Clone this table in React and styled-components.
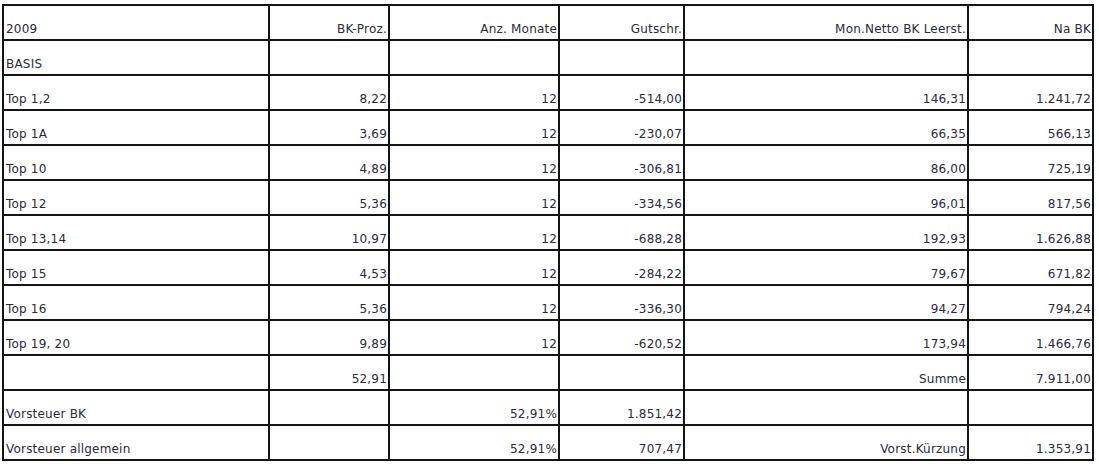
import React from 'react';
import styled, { createGlobalStyle } from 'styled-components';

const GlobalStyle = createGlobalStyle`
  body {
    margin: 0;
    background: #fff;
  }
`;

const Page = styled.div`
  padding: 4px 0 0 2px;
`;

const Table = styled.table`
  border-collapse: collapse;
  table-layout: fixed;
  width: 1092px;
  font-family: "DejaVu Sans", Verdana, sans-serif;
  font-size: 12px;
  letter-spacing: 0.2px;
  color: #2a2a3a;
`;

const Row = styled.tr`
  height: 35px;
`;

const Cell = styled.td`
  border: 2px solid #151515;
  padding: 0 1px 3px ${p => (p.$left ? '2px' : '1px')};
  text-align: ${p => (p.$left ? 'left' : 'right')};
  vertical-align: bottom;
  white-space: nowrap;
  line-height: 13px;
`;

const widths = [266, 120, 170, 125, 284, 125];

const rows = [
  ['2009', 'BK-Proz.', 'Anz. Monate', 'Gutschr.', 'Mon.Netto BK Leerst.', 'Na BK'],
  ['BASIS', '', '', '', '', ''],
  ['Top 1,2', '8,22', '12', '-514,00', '146,31', '1.241,72'],
  ['Top 1A', '3,69', '12', '-230,07', '66,35', '566,13'],
  ['Top 10', '4,89', '12', '-306,81', '86,00', '725,19'],
  ['Top 12', '5,36', '12', '-334,56', '96,01', '817,56'],
  ['Top 13,14', '10,97', '12', '-688,28', '192,93', '1.626,88'],
  ['Top 15', '4,53', '12', '-284,22', '79,67', '671,82'],
  ['Top 16', '5,36', '12', '-336,30', '94,27', '794,24'],
  ['Top 19, 20', '9,89', '12', '-620,52', '173,94', '1.466,76'],
  ['', '52,91', '', '', 'Summe', '7.911,00'],
  ['Vorsteuer BK', '', '52,91%', '1.851,42', '', ''],
  ['Vorsteuer allgemein', '', '52,91%', '707,47', 'Vorst.Kürzung', '1.353,91'],
];

export default function App() {
  return (
    <Page>
      <GlobalStyle />
      <Table>
        <colgroup>
          {widths.map((w, i) => <col key={i} style={{ width: w }} />)}
        </colgroup>
        <tbody>
          {rows.map((r, i) => (
            <Row key={i}>
              {r.map((c, j) => (
                <Cell key={j} $left={j === 0}>{c}</Cell>
              ))}
            </Row>
          ))}
        </tbody>
      </Table>
    </Page>
  );
}
